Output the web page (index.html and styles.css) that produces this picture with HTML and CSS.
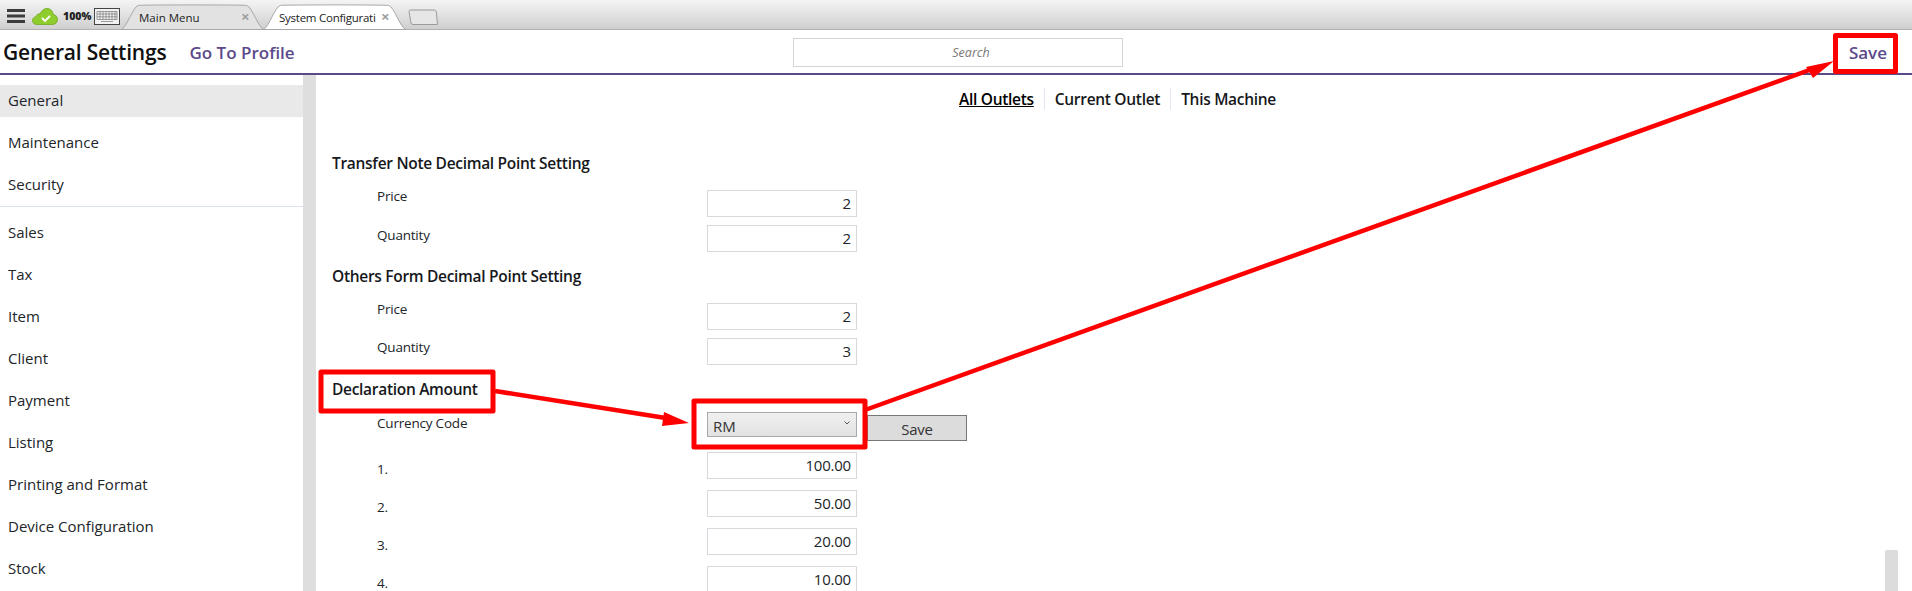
FILE: index.html
```html
<!DOCTYPE html>
<html lang="en">
<head>
<meta charset="utf-8">
<title>General Settings</title>
<link rel="stylesheet" href="styles.css">
</head>
<body>
<div class="page">
  <div class="topbar">
    <svg class="menu-icon" width="18" height="14" viewBox="0 0 18 14"><path d="M0 1.500h18M0 7h18M0 12.500h18" stroke="#3c3c3c" stroke-width="3"/></svg>
    <svg class="cloud-icon" width="26" height="17" viewBox="0 0 26 17"><path d="M5 16.500C2 16.500 .5 14.500 .5 12.500 .5 10.500 2 9 4 8.700 4.500 6.500 6.500 5.500 8 6 9.500 2.500 12 .5 15 .5c3.500 0 6 2.500 6.200 6 2.800.4 4.300 2.700 4.300 5 0 2.500-2 5-5 5z" fill="#8fcc2e" stroke="#6fa81e" stroke-width=".8"/><path d="M10 10l3 3 5-5" fill="none" stroke="#fff" stroke-width="1.800"/></svg>
    <span class="percent">100%</span>
    <svg class="kbd-icon" width="26" height="17" viewBox="0 0 26 17"><rect x=".5" y=".5" width="25" height="16" fill="#f2f2f2" stroke="#444"/><path d="M3 3.500h20v8H3zM3 6h20M3 8.800h20M6 3.500v8M9 3.500v8M12 3.500v8M15 3.500v8M18 3.500v8M21 3.500v8M7 13.500h12" fill="none" stroke="#777" stroke-width=".7"/></svg>
    <div class="tab">
      <svg class="tab-shape" width="143" height="26" viewBox="0 0 143 26"><path d="M0 25.500C5 25 12 3 17 1.500 19 .7 124 .7 126 1.500c5 1.500 12 23.500 17 24z" fill="#e2e2e2" stroke="#a8a8a8"/></svg>
      <span class="tab-label">Main Menu</span><span class="tab-close">×</span>
    </div>
    <div class="tab tab-active">
      <svg class="tab-shape" width="143" height="26" viewBox="0 0 143 26"><path d="M0 25.500C5 25 12 3 17 1.500 19 .7 124 .7 126 1.500c5 1.500 12 23.500 17 24z" fill="#fff" stroke="#a8a8a8"/></svg>
      <span class="tab-label">System Configurati</span><span class="tab-close">×</span>
    </div>
    <svg class="new-tab" width="30" height="16" viewBox="0 0 30 16"><path d="M1 2.500Q1 1 3 1h23q2 0 2.300 1.500L29.500 15.500H5Q3.500 15.500 3 14z" fill="#e6e6e6" stroke="#9a9a9a"/></svg>
  </div>

  <header class="header">
    <div class="header-left">
      <h1 class="title">General Settings</h1>
      <a class="profile-link">Go To Profile</a>
    </div>
    <div class="search">Search</div>
    <a class="save-link">Save</a>
  </header>

  <div class="body">
    <nav class="sidebar">
      <div class="nav-item nav-active">General</div>
      <div class="nav-item">Maintenance</div>
      <div class="nav-item">Security</div>
      <div class="nav-divider"></div>
      <div class="nav-item">Sales</div>
      <div class="nav-item">Tax</div>
      <div class="nav-item">Item</div>
      <div class="nav-item">Client</div>
      <div class="nav-item">Payment</div>
      <div class="nav-item">Listing</div>
      <div class="nav-item">Printing and Format</div>
      <div class="nav-item">Device Configuration</div>
      <div class="nav-item">Stock</div>
    </nav>
    <div class="side-scroll"></div>
    <main class="content">
      <div class="scope-tabs">
        <span class="scope scope-active">All Outlets</span>
        <span class="scope">Current Outlet</span>
        <span class="scope">This Machine</span>
      </div>

      <h2 class="section first">Transfer Note Decimal Point Setting</h2>
      <div class="row"><span class="label label-high">Price</span><div class="field">2</div></div>
      <div class="row"><span class="label label-low">Quantity</span><div class="field">2</div></div>

      <h2 class="section">Others Form Decimal Point Setting</h2>
      <div class="row"><span class="label label-high">Price</span><div class="field">2</div></div>
      <div class="row"><span class="label">Quantity</span><div class="field">3</div></div>

      <h2 class="section section-tight">Declaration Amount</h2>
      <div class="row row-select">
        <span class="label">Currency Code</span>
        <div class="select">RM<svg class="chevron" width="6" height="4" viewBox="0 0 6 4"><path d="M.5.500 3 3 5.500.500" fill="none" stroke="#555"/></svg></div>
        <div class="button">Save</div>
      </div>
      <div class="row row-amount"><span class="label">1.</span><div class="field">100.00</div></div>
      <div class="row row-amount"><span class="label">2.</span><div class="field">50.00</div></div>
      <div class="row row-amount"><span class="label">3.</span><div class="field">20.00</div></div>
      <div class="row row-amount"><span class="label">4.</span><div class="field">10.00</div></div>
    </main>
    <div class="page-scroll"></div>
  </div>

  <svg class="annotations" width="1912" height="591" viewBox="0 0 1912 591">
    <g fill="none" stroke="#f00" stroke-width="5" stroke-linejoin="round">
      <rect x="321" y="372" width="172" height="39"/>
      <rect x="694" y="401" width="171" height="46"/>
      <rect x="1835.500" y="35.500" width="60" height="36"/>
    </g>
    <g stroke="#f00" stroke-width="4.500">
      <path d="M495 391 672 419"/>
      <path d="M865 410 1815 68"/>
    </g>
    <g fill="#f00">
      <path d="M689 423 664 412 662 426z"/>
      <path d="M1834 61 1806 67 1813 78z"/>
    </g>
  </svg>
</div>
</body>
</html>
```

FILE: styles.css
```css
* { box-sizing: border-box; }
html, body { margin: 0; padding: 0; background: #fff; }
body { font-family: "Open Sans", "Noto Sans", sans-serif; color: #212529; }
.page { position: relative; width: 1912px; height: 591px; overflow: hidden; }

.topbar {
  display: flex; align-items: flex-end; height: 30px; padding-left: 7px;
  background: linear-gradient(#f4f4f4 0, #efefef 15%, #cfcfcf 100%);
  border-bottom: 1px solid #b0b0b0;
}
.menu-icon { margin: 0 0 6px 0; }
.cloud-icon { margin: 0 0 4px 7px; }
.percent { font-size: 10.500px; font-weight: 800; color: #222; margin: 0 0 5px 5px; line-height: 15px; width: 28px; white-space: nowrap; }
.kbd-icon { margin: 0 0 4px 3px; }
.tab { position: relative; display: flex; align-items: center; width: 143px; height: 26px; margin-left: 1px; margin-bottom: -1px; }
.tab-active { margin-left: -1px; }
.tab-shape { position: absolute; left: 0; top: 0; }
.tab-label { position: relative; font-size: 11.500px; color: #222; margin-left: 18px; width: 100px; white-space: nowrap; overflow: hidden; }
.tab-close { position: absolute; left: 120px; top: 4px; font-size: 15px; line-height: 16px; font-weight: 700; color: #a0a0a0; }
.tab-active .tab-label { margin-left: 16px; width: 101px; letter-spacing: -.25px; }
.tab-active .tab-close { left: 118px; }
.new-tab { margin: 0 0 4px 2px; }

.header {
  display: grid; grid-template-columns: 793px 330px 1fr; align-items: center;
  height: 45px; border-bottom: 2px solid #5b4a8a; padding-top: 1px;
}
.header-left { display: flex; align-items: center; padding-left: 3px; }
.title { margin: 0; font-size: 21px; font-weight: 600; color: #111; letter-spacing: -.2px; white-space: nowrap; }
.profile-link { margin-left: 23px; font-size: 17px; font-weight: 600; color: #5b4a8a; white-space: nowrap; }
.search { height: 29px; border: 1px solid #d4d4d4; font-size: 12.500px; font-style: italic; color: #777; text-align: center; line-height: 27px; padding-left: 26px; }
.save-link { justify-self: end; margin-right: 25px; font-size: 17px; font-weight: 600; color: #5b4a8a; }

.body { display: flex; height: 516px; position: relative; }
.sidebar { width: 303px; flex: none; padding-top: 10px; }
.nav-item { height: 32px; margin-bottom: 10px; padding-left: 8px; font-size: 15px; line-height: 31px; color: #212529; white-space: nowrap; }
.nav-active { background: #e9e9e9; }
.nav-divider { height: 1px; background: #dde3ee; margin: -5px 0 10px; }
.side-scroll { width: 13px; flex: none; background: #dedede; }
.content { flex: 1; min-width: 0; padding-left: 16px; }
.page-scroll { position: absolute; left: 1885px; top: 475px; width: 13px; height: 41px; background: #dcdcdc; border-radius: 2px 2px 0 0; }

.scope-tabs { display: flex; justify-content: center; padding: 13px 9px 1px 0; }
.scope { height: 22px; padding: 0 10px; font-size: 15.500px; font-weight: 600; line-height: 22px; color: #16181b; letter-spacing: -.3px; border-right: 1px solid #e1e6f0; white-space: nowrap; }
.scope:last-child { border-right: 0; }
.scope-active { text-decoration: underline; color: #000; }

.section { margin: 14px 0 16px; height: 21px; font-size: 15.500px; font-weight: 600; line-height: 21px; color: #16181b; letter-spacing: -.3px; }
.section.first { margin-top: 42px; }
.section.section-tight { margin-bottom: 12px; }
.row { display: flex; align-items: flex-start; height: 27px; margin-bottom: 8px; }
.label { width: 375px; flex: none; padding-left: 45px; font-size: 13.500px; line-height: 18px; color: #212529; letter-spacing: -.2px; }
.label-high { margin-top: -3px; }
.label-low { margin-top: 1px; }
.field { width: 150px; height: 27px; border: 1px solid #d8d8de; padding-right: 5px; font-size: 15px; line-height: 25px; text-align: right; color: #212529; letter-spacing: -.2px; }
.row-select { height: 28px; margin: 0 0 12px; }
.row-select .label { padding-top: 2px; }
.select { position: relative; width: 150px; height: 25px; border: 1px solid #a9a9a9; background: linear-gradient(#f0f0f0, #e2e2e2); padding-left: 5px; font-size: 15px; line-height: 26px; color: #333; }
.chevron { position: absolute; right: 6px; top: 8px; }
.button { width: 100px; height: 26px; margin-top: 3px; margin-left: 10px; background: #dcdcdc; border: 1px solid #777; font-size: 15px; line-height: 26px; text-align: center; color: #333; letter-spacing: -.2px; }
.row-amount { margin-bottom: 11px; }
.row-amount .label { padding-top: 8px; }
.annotations { position: absolute; left: 0; top: 0; pointer-events: none; }
```
